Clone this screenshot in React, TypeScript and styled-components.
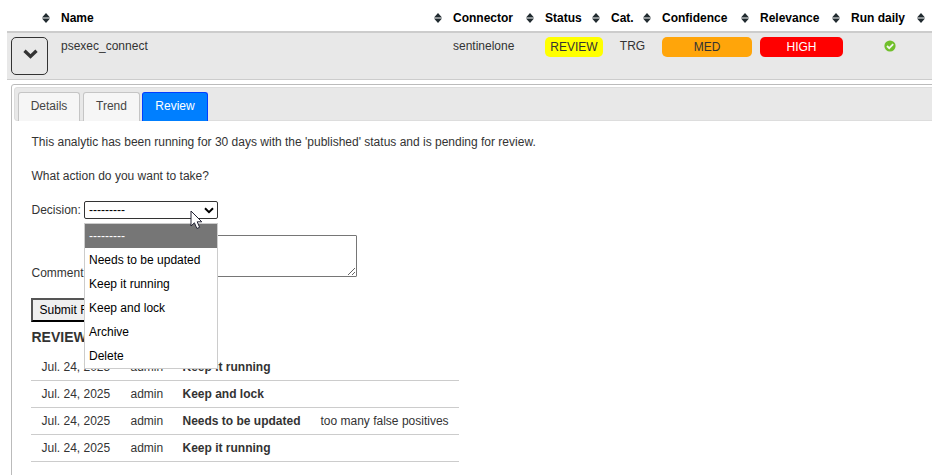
import React from "react";
import styled, { createGlobalStyle } from "styled-components";

const GlobalStyle = createGlobalStyle`
  * { box-sizing: border-box; }
  body {
    margin: 0;
    background: #fff;
    color: #333;
    font: 12px/14px "Liberation Sans", Arial, sans-serif;
    overflow: hidden;
  }
`;

const Page = styled.main`
  width: 932px;
  height: 475px;
  padding-left: 7px;
  overflow: hidden;
`;

const columns = "50px 392px 92px 66px 51px 98px 91px 85px";

const HeaderRow = styled.div`
  display: grid;
  grid-template-columns: ${columns};
  height: 33px;
  border-bottom: 2px solid #ccc;
  color: #000;
  font-weight: bold;
`;

const HeaderCell = styled.div`
  display: flex;
  justify-content: space-between;
  align-items: flex-start;
  padding: 11px 7px 0 4px;
  white-space: nowrap;
`;

const SortIcon = styled.svg`
  width: 8px;
  height: 10px;
  margin-top: 2px;
  flex: none;
`;

const DataRow = styled.div`
  display: grid;
  grid-template-columns: ${columns};
  height: 47px;
  background: #e8e8e8;
  border-bottom: 1px solid #ccc;
`;

const Cell = styled.div<{ $center?: boolean }>`
  padding: ${(p) => (p.$center ? "6px 4px 0" : "6px 0 0 4px")};
  text-align: ${(p) => (p.$center ? "center" : "left")};
`;

const CheckIcon = styled.svg`
  display: block;
  margin: 1px auto 0;
`;

const ExpandButton = styled.button`
  display: flex;
  align-items: center;
  justify-content: center;
  width: 37px;
  height: 38px;
  margin: 4px 0 0 4px;
  padding: 0 0 4px 1px;
  border: 1px solid #333;
  border-radius: 5px;
  background: transparent;
`;

const Badge = styled.div<{ $bg: string; $color?: string; $width: number }>`
  width: ${(p) => p.$width}px;
  height: 20px;
  margin: -2px 0 0;
  border-radius: 5px;
  background: ${(p) => p.$bg};
  color: ${(p) => p.$color ?? "#333"};
  line-height: 20px;
  text-align: center;
`;

const Panel = styled.section`
  width: 940px;
  height: 420px;
  margin: 4px 0 0 4px;
  padding: 2px;
  border: 1px solid #bbb;
  border-radius: 3px;
`;

const TabBar = styled.nav`
  display: flex;
  align-items: flex-end;
  gap: 3px;
  height: 34px;
  padding-left: 3px;
  border: 1px solid #ddd;
  border-radius: 3px;
  background: #e8e8e8;
`;

const Tab = styled.button<{ $active?: boolean; $width: number }>`
  width: ${(p) => p.$width}px;
  height: 29px;
  margin-bottom: -1px;
  margin-left: ${(p) => (p.$active ? "-1px" : "0")};
  padding: 0 0 3px;
  border: 1px solid ${(p) => (p.$active ? "#003eff" : "#c5c5c5")};
  border-bottom: 0;
  border-radius: 3px 3px 0 0;
  background: ${(p) => (p.$active ? "#007fff" : "#f6f6f6")};
  color: ${(p) => (p.$active ? "#fff" : "#454545")};
  font: inherit;
`;

const Content = styled.div`
  padding: 14px 17px 0;
`;

const Paragraph = styled.p`
  margin: 0 0 20px;
  padding-left: 0.5px;
`;

const Field = styled.div`
  display: flex;
  align-items: center;
  height: 18px;
  margin-top: -2px;
  gap: 4px;
`;

const FieldLabel = styled.label<{ $width: number }>`
  width: ${(p) => p.$width}px;
  padding-left: 0.5px;
  white-space: nowrap;
`;

const SelectBox = styled.div`
  position: relative;
  display: flex;
  align-items: center;
  justify-content: space-between;
  width: 134px;
  height: 18px;
  padding: 0 3px 0 4px;
  border: 1px solid #333;
  border-radius: 2px;
  background: #fff;
  color: #000;
`;

const Options = styled.ul`
  position: absolute;
  z-index: 2;
  top: 21px;
  left: -1px;
  width: 134px;
  height: 146px;
  margin: 0;
  padding: 0;
  border: 1px solid #ccc;
  background: #fff;
  list-style: none;
`;

const Option = styled.li<{ $selected?: boolean }>`
  height: 24px;
  padding-left: 4px;
  background: ${(p) => (p.$selected ? "#767676" : "#fff")};
  color: ${(p) => (p.$selected ? "#fff" : "#000")};
  line-height: 24px;
`;

const Pointer = styled.svg`
  position: absolute;
  z-index: 3;
  left: 105px;
  top: 8px;
`;

const CommentField = styled.div`
  display: flex;
  align-items: flex-end;
  height: 42px;
  margin-top: 16px;
`;

const CommentLabel = styled.label`
  width: 62px;
  padding-left: 0.5px;
  margin-bottom: -3px;
`;

const TextArea = styled.textarea`
  width: 264px;
  height: 42px;
  border: 1px solid #767676;
  border-radius: 1px;
  background: #fff;
`;

const SubmitButton = styled.button`
  display: block;
  width: 98px;
  height: 24px;
  margin: 21px 0 0;
  padding: 0 0 0 6.5px;
  border: 2px solid;
  border-color: #555 #000 #000 #555;
  background: #efefef;
  color: #000;
  font: inherit;
  text-align: left;
  white-space: nowrap;
`;

const HistoryTitle = styled.h2`
  height: 16px;
  margin: 7px 0 9px;
  padding-left: 0.5px;
  font-size: 14px;
  line-height: 16px;
`;

const History = styled.div`
  width: 428px;
`;

const HistoryRow = styled.div`
  display: grid;
  grid-template-columns: 89px 52px 138px 1fr;
  height: 27px;
  padding: 6px 0 0 10.5px;
  border-bottom: 1px solid #ccc;
  white-space: nowrap;
`;

const headers = ["", "Name", "Connector", "Status", "Cat.", "Confidence", "Relevance", "Run daily"];
const options = ["---------", "Needs to be updated", "Keep it running", "Keep and lock", "Archive", "Delete"];
const history = [
  { decision: "Keep it running", comment: "" },
  { decision: "Keep and lock", comment: "" },
  { decision: "Needs to be updated", comment: "too many false positives" },
  { decision: "Keep it running", comment: "" },
];

export default function App() {
  return (
    <Page>
      <GlobalStyle />
      <HeaderRow>
        {headers.map((h) => (
          <HeaderCell key={h}>
            <span>{h}</span>
            <SortIcon viewBox="0 0 8 10"><path d="M4 0 8 4.4H0ZM4 10 8 5.6H0Z" fill="#212b30" /></SortIcon>
          </HeaderCell>
        ))}
      </HeaderRow>
      <DataRow>
        <ExpandButton aria-label="Collapse">
          <svg width="15" height="10" viewBox="0 0 15 10"><path d="m1.5 1.7 6 5.7 6-5.7" fill="none" stroke="#333" strokeWidth="3.3" /></svg>
        </ExpandButton>
        <Cell>psexec_connect</Cell>
        <Cell>sentinelone</Cell>
        <Cell><Badge $bg="#ff0" $width={58}>REVIEW</Badge></Cell>
        <Cell $center>TRG</Cell>
        <Cell><Badge $bg="#ffa50a" $width={90}>MED</Badge></Cell>
        <Cell><Badge $bg="#f00" $color="#fff" $width={83}>HIGH</Badge></Cell>
        <Cell $center>
          <CheckIcon width="12" height="12" viewBox="0 0 12 12"><circle cx="6" cy="6" r="5.6" fill="#70bf2b" /><path d="m3 6 2.2 2.2 4-4.1" fill="none" stroke="#f2f5ef" strokeWidth="1.8" /></CheckIcon>
        </Cell>
      </DataRow>
      <Panel>
        <TabBar>
          <Tab $width={62}>Details</Tab>
          <Tab $width={57}>Trend</Tab>
          <Tab $width={66} $active>Review</Tab>
        </TabBar>
        <Content>
          <Paragraph>This analytic has been running for 30 days with the 'published' status and is pending for review.</Paragraph>
          <Paragraph>What action do you want to take?</Paragraph>
          <Field>
            <FieldLabel $width={49}>Decision:</FieldLabel>
            <SelectBox>
              <span>---------</span>
              <svg width="10" height="7" viewBox="0 0 10 7"><path d="m1 1.3 4 3.9 4-3.9" fill="none" stroke="#000" strokeWidth="2" /></svg>
              <Options>
                {options.map((o, i) => <Option key={o} $selected={i === 0}>{o}</Option>)}
              </Options>
              <Pointer width="13" height="20" viewBox="0 0 13 20"><path d="M1 1v15l3.4-3.2 2.5 5.7 2.7-1.2-2.4-5.5h4.6Z" fill="#fff" stroke="#223" /></Pointer>
            </SelectBox>
          </Field>
          <CommentField>
            <CommentLabel>Comment:</CommentLabel>
            <TextArea />
          </CommentField>
          <SubmitButton>Submit Review</SubmitButton>
          <HistoryTitle>REVIEWS</HistoryTitle>
          <History>
            {history.map((item, i) => (
              <HistoryRow key={i}>
                <span>Jul. 24, 2025</span>
                <span>admin</span>
                <b>{item.decision}</b>
                <span>{item.comment}</span>
              </HistoryRow>
            ))}
          </History>
        </Content>
      </Panel>
    </Page>
  );
}
